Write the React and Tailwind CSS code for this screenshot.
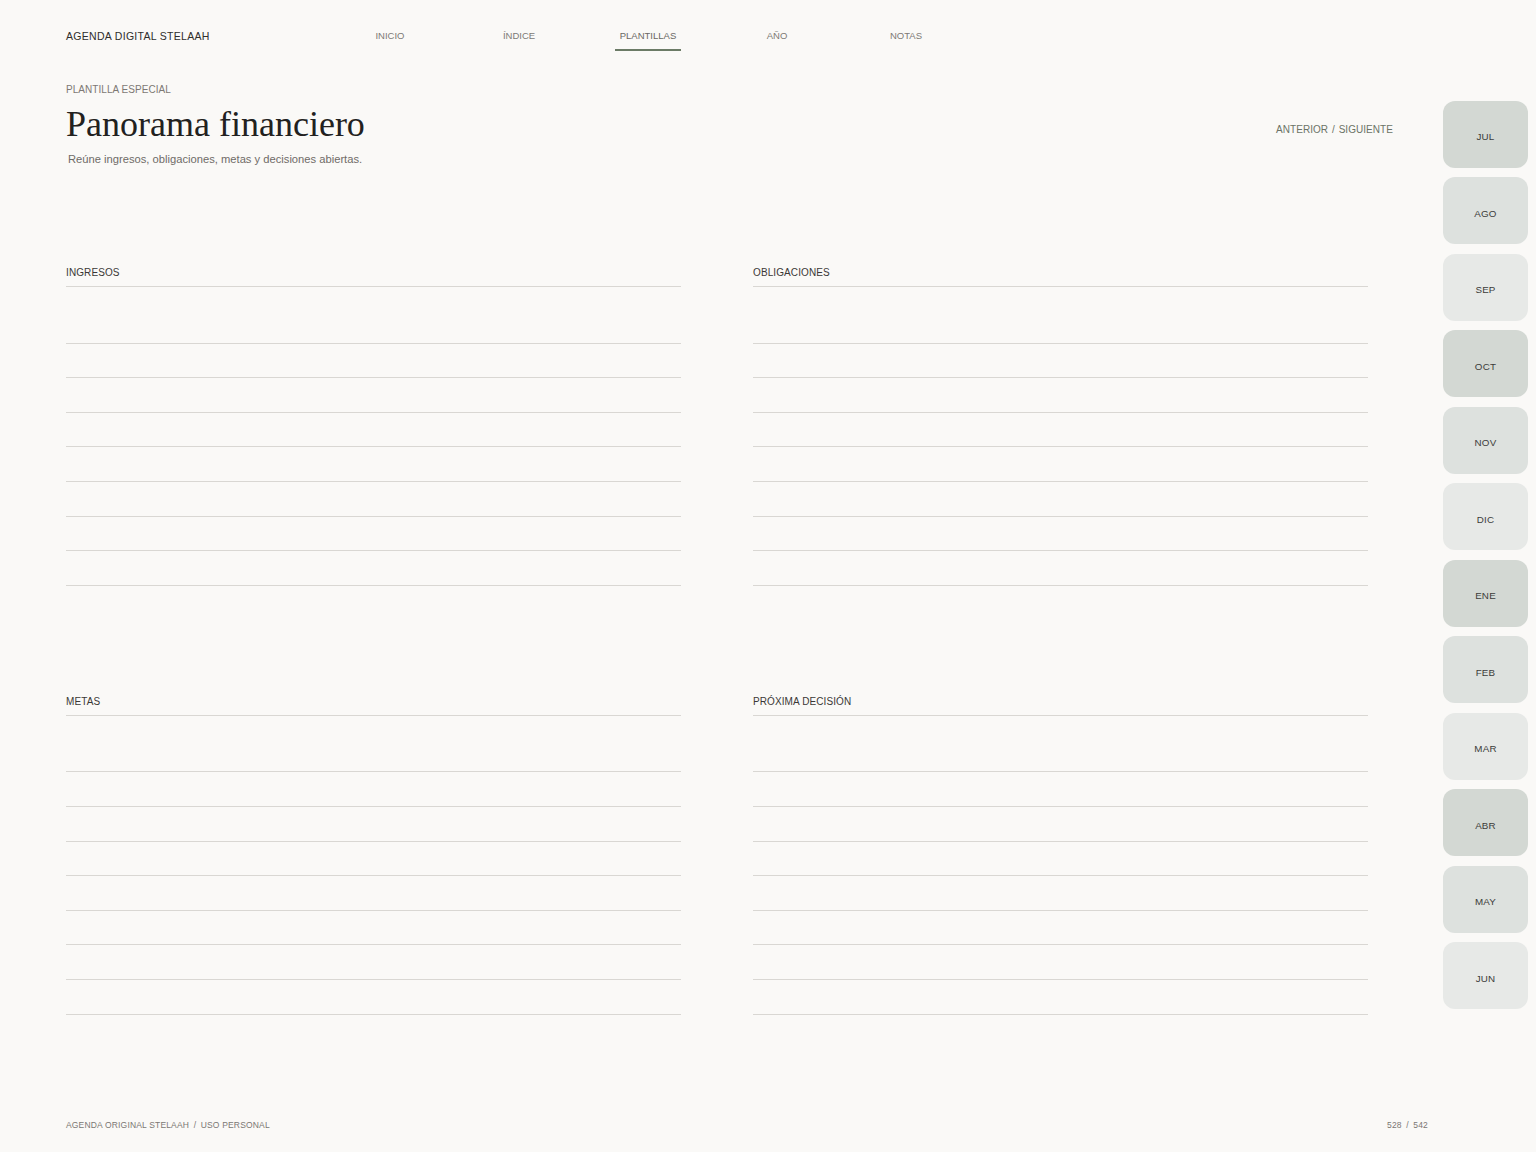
const NAV = ["INICIO", "ÍNDICE", "PLANTILLAS", "AÑO", "NOTAS"];
const ACTIVE = "PLANTILLAS";

const MONTHS = [
  ["JUL", "bg-[#d3d8d3]"],
  ["AGO", "bg-[#dde1de]"],
  ["SEP", "bg-[#e7e9e7]"],
  ["OCT", "bg-[#d3d8d3]"],
  ["NOV", "bg-[#dde1de]"],
  ["DIC", "bg-[#e7e9e7]"],
  ["ENE", "bg-[#d3d8d3]"],
  ["FEB", "bg-[#dde1de]"],
  ["MAR", "bg-[#e7e9e7]"],
  ["ABR", "bg-[#d3d8d3]"],
  ["MAY", "bg-[#dde1de]"],
  ["JUN", "bg-[#e7e9e7]"],
];

const SECTIONS = ["INGRESOS", "OBLIGACIONES", "METAS", "PRÓXIMA DECISIÓN"];
const ROWS = 8;

function Section({ title }) {
  return (
    <section>
      <h2 className="pt-[1px] text-[10px] leading-[12px] tracking-[0.1px] text-[#3a3836] pb-[7px] border-b border-[#d9d7d3]">
        {title}
      </h2>
      <div className="mt-[22px]">
        {Array.from({ length: ROWS }).map((_, i) => (
          <div key={i} className="h-[34.6px] border-b border-[#d9d7d3]" />
        ))}
      </div>
    </section>
  );
}

export default function App() {
  return (
    <div className="h-[1152px] w-full bg-[#faf9f7] flex flex-col font-['Liberation_Sans',Arial,sans-serif] text-[#2f2d2b]">
      <div className="flex">
        {/* Page */}
        <div className="w-[1393px] pl-[66px]">
          {/* Header */}
          <header className="pt-[29px] flex items-start">
            <div className="w-[259.5px] text-[10.5px] leading-[14px] tracking-[0.3px] text-[#2f2d2b]">
              AGENDA DIGITAL STELAAH
            </div>
            <nav className="grid grid-cols-5 w-[645px] mt-[1px]">
              {NAV.map((item) => (
                <div key={item} className="flex justify-center">
                  <span
                    className={`px-[5px] pb-[7px] text-[9.5px] leading-[12px] border-b-2 ${
                      item === ACTIVE
                        ? "border-[#6b7b66] text-[#6a6864]"
                        : "border-transparent text-[#7d7a76]"
                    }`}
                  >
                    {item}
                  </span>
                </div>
              ))}
            </nav>
          </header>

          {/* Title row */}
          <div className="mt-[33px] flex justify-between items-start">
            <div>
              <p className="text-[10px] leading-[12px] tracking-[0.05px] text-[#7d7874]">PLANTILLA ESPECIAL</p>
              <h1 className="mt-[10px] font-['Liberation_Serif','Times_New_Roman',serif] text-[36px] leading-[36px] text-[#222120]">
                Panorama financiero
              </h1>
              <p className="mt-[10px] ml-[2px] text-[11.2px] leading-[14px] text-[#6f6b67]">
                Reúne ingresos, obligaciones, metas y decisiones abiertas.
              </p>
            </div>
            <div className="mt-[40px] text-[10px] leading-[12px] tracking-[0.05px] text-[#6b7366]">
              ANTERIOR <span className="mx-[1px]">/</span> SIGUIENTE
            </div>
          </div>

          {/* Sections */}
          <div className="mt-[100px] w-[1302px] grid grid-cols-2 gap-x-[72px] gap-y-[109px]">
            {SECTIONS.map((s) => (
              <Section key={s} title={s} />
            ))}
          </div>
        </div>

        {/* Month tabs */}
        <aside className="ml-[50px] pt-[100.7px] flex flex-col gap-[9.5px]">
          {MONTHS.map(([m, bg]) => (
            <div
              key={m}
              className={`w-[85px] h-[67px] rounded-[12px] ${bg} flex items-center justify-center pt-[7px] text-[9.8px] tracking-[0.2px] text-[#3c3c3a]`}
            >
              {m}
            </div>
          ))}
        </aside>
      </div>

      {/* Footer */}
      <footer className="mt-auto pb-[21px] pl-[66px] w-[1428px] flex justify-between text-[8.5px] leading-[12px] tracking-[0.17px] text-[#7a7773]">
        <span>
          AGENDA ORIGINAL STELAAH <span className="mx-[2px]">/</span> USO PERSONAL
        </span>
        <span>
          528 <span className="mx-[2px]">/</span> 542
        </span>
      </footer>
    </div>
  );
}
